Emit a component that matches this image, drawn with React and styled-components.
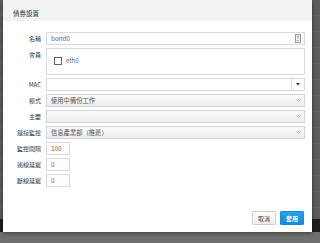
import React from "react";
import styled, { createGlobalStyle } from "styled-components";

const Global = createGlobalStyle`
  html, body { margin: 0; padding: 0; }
  body {
    width: 320px; height: 243px; overflow: hidden;
    background: #5b5b5b;
    font-family: "Noto Sans CJK TC", "Noto Sans", sans-serif;
  }
`;

const Page = styled.div`
  position: relative;
  width: 320px;
  height: 243px;
  display: flex;
  flex-direction: column;
`;

const BackRows = styled.div`
  height: 219px;
  background: repeating-linear-gradient(
    to bottom,
    #5b5b5b 0px,
    #5b5b5b 15px,
    #636363 15px,
    #636363 16px
  );
`;

const DarkBar = styled.div`
  height: 13px;
  background: #1e1e1e;
`;

const BottomArea = styled.div`
  flex: 1;
  background: #6e6e6e;
`;

const Modal = styled.div`
  position: absolute;
  left: 3px;
  top: 0;
  width: 309px;
  height: 232px;
  background: #fff;
  box-shadow: 0 1px 4px rgba(0, 0, 0, 0.45);
  display: flex;
  flex-direction: column;
`;

const Header = styled.div`
  height: 21px;
  background: #f2f2f2;
  display: flex;
  align-items: center;
  padding: 4px 0 0 10px;
  box-sizing: border-box;
  font-size: 6.5px;
  color: #333;
`;

const Form = styled.div`
  display: grid;
  grid-template-columns: 38px 1fr;
  column-gap: 5px;
  row-gap: 3px;
  padding: 11px 7px 0 0;
`;

const Label = styled.div`
  text-align: right;
  font-size: 6px;
  color: #333;
  line-height: ${(p) => (p.$top ? "8px" : "13px")};
  padding-top: ${(p) => (p.$top ? "3px" : "0")};
  white-space: nowrap;
`;

const Field = styled.div`
  height: ${(p) => p.$h || 13}px;
  width: ${(p) => (p.$w ? `${p.$w}px` : "auto")};
  box-sizing: border-box;
  border: 1px solid #dadada;
  background: #fff;
  display: flex;
  align-items: center;
  font-size: 6.3px;
  color: #666;
  padding-left: 4px;
  position: relative;
`;

const Text = styled.span`
  flex: 1;
  white-space: nowrap;
`;

const Select = styled(Field)`
  background: linear-gradient(#fbfbfb, #eeeeee);
  border-color: #d4d4d4;
  color: #555;
`;

const Members = styled.div`
  height: 27px;
  box-sizing: border-box;
  border: 1px solid #dadada;
  display: flex;
  align-items: flex-start;
  padding: 8px 0 0 7px;
  gap: 4px;
  font-size: 6px;
  color: #666;
`;

const Check = styled.span`
  width: 8px;
  height: 8px;
  box-sizing: border-box;
  border: 1px solid #666;
  background: #fff;
  flex: none;
`;

const CheckText = styled.span`
  line-height: 8px;
`;

const DropBtn = styled.div`
  width: 12px;
  align-self: stretch;
  border-left: 1px solid #dadada;
  display: flex;
  align-items: center;
  justify-content: center;
`;

const Chevron = styled.div`
  width: 12px;
  display: flex;
  align-items: center;
  justify-content: center;
`;

const IconBox = styled.div`
  width: 12px;
  display: flex;
  align-items: center;
  justify-content: center;
`;

const Footer = styled.div`
  margin-top: auto;
  display: flex;
  justify-content: flex-end;
  gap: 4px;
  padding: 0 8px 7px 0;
`;

const Button = styled.button`
  width: 24px;
  height: 14px;
  padding: 0;
  font-family: inherit;
  font-size: 6px;
  border-radius: 1px;
  border: 1px solid ${(p) => (p.$primary ? "#1689d6" : "#cfcfcf")};
  background: ${(p) => (p.$primary ? "linear-gradient(#2ea0e6, #178ad5)" : "linear-gradient(#fdfdfd, #efefef)")};
  color: ${(p) => (p.$primary ? "#fff" : "#444")};
  font-weight: ${(p) => (p.$primary ? 700 : 400)};
  display: flex;
  align-items: center;
  justify-content: center;
`;

const CardIcon = () => (
  <svg width="6" height="9" viewBox="0 0 6 9">
    <rect x="0.5" y="0.5" width="5" height="8" fill="#f4f4f4" stroke="#999" strokeWidth="1" />
    <rect x="2" y="2" width="2" height="1" fill="#999" />
    <rect x="2.5" y="3" width="1" height="2" fill="#aaa" />
    <rect x="1.5" y="6" width="3" height="1" fill="#bbb" />
  </svg>
);

const Caret = () => (
  <svg width="4" height="3" viewBox="0 0 4 3">
    <path d="M0 0 L4 0 L2 2.5 Z" fill="#333" />
  </svg>
);

const Down = () => (
  <svg width="5" height="3" viewBox="0 0 5 3">
    <path d="M0.5 0.5 L2.5 2.5 L4.5 0.5" fill="none" stroke="#999" strokeWidth="0.8" />
  </svg>
);

export default function App() {
  return (
    <>
      <Global />
      <Page>
        <BackRows />
        <DarkBar />
        <BottomArea />
        <Modal>
          <Header>債券設置</Header>
          <Form>
            <Label>名稱</Label>
            <Field>
              <Text>bond0</Text>
              <IconBox><CardIcon /></IconBox>
            </Field>

            <Label $top>會員</Label>
            <Members>
              <Check />
              <CheckText>eth0</CheckText>
            </Members>

            <Label>MAC</Label>
            <Field>
              <Text />
              <DropBtn><Caret /></DropBtn>
            </Field>

            <Label>模式</Label>
            <Select>
              <Text>使用中備份工作</Text>
              <Chevron><Down /></Chevron>
            </Select>

            <Label>主要</Label>
            <Select>
              <Text />
              <Chevron><Down /></Chevron>
            </Select>

            <Label>鏈接監控</Label>
            <Select>
              <Text>信息產業部（推薦）</Text>
              <Chevron><Down /></Chevron>
            </Select>

            <Label>監控間隔</Label>
            <Field $w={24}><Text>100</Text></Field>

            <Label>連線延遲</Label>
            <Field $w={24}><Text>0</Text></Field>

            <Label>斷線延遲</Label>
            <Field $w={24}><Text>0</Text></Field>
          </Form>
          <Footer>
            <Button>取消</Button>
            <Button $primary>套用</Button>
          </Footer>
        </Modal>
      </Page>
    </>
  );
}
